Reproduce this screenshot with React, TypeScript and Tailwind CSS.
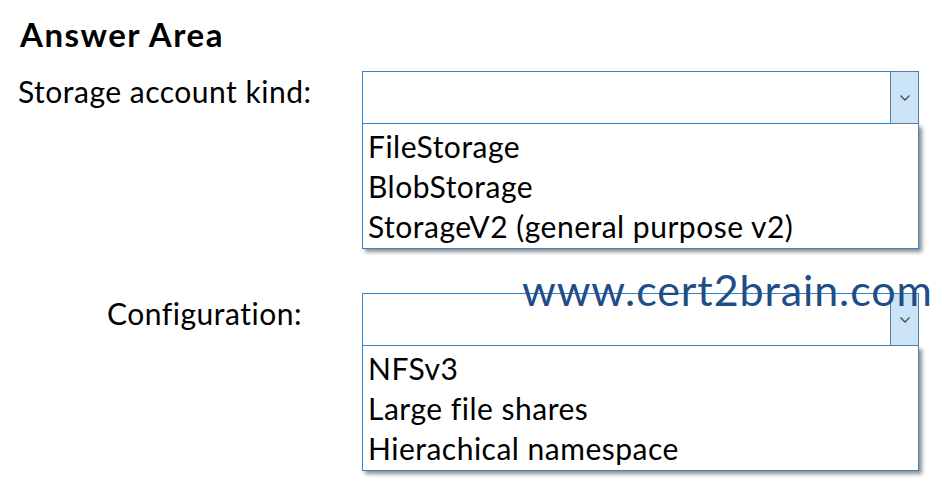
import React from 'react';

const font = { fontFamily: 'Lato, "Open Sans", sans-serif' };

interface DropdownProps {
    options: string[];
}

const Chevron = () => (
    <svg width="12" height="8" viewBox="0 0 12 8" fill="none">
        <path d="M1.5 1.5 L6 6 L10.5 1.5" stroke="#4d4d4d" strokeWidth="1.4" />
    </svg>
);

const Dropdown: React.FC<DropdownProps> = ({ options }) => (
    <div className="w-[557px]">
        <div className="flex h-[53px] border border-[#2f86d6] bg-white">
            <div className="flex-1" />
            <div className="-my-px -mr-px flex w-[29px] items-center justify-center border border-[#5a7ea3] bg-[#cce4f7]">
                <Chevron />
            </div>
        </div>
        <div className="flex flex-col border border-t-0 border-[#2f86d6] bg-white pl-[5px] pt-[2px] pb-[2px] shadow-[3px_3px_4px_rgba(0,0,0,0.45)]">
            {options.map((o) => (
                <div key={o} className="h-[40px] text-[30px] leading-[40px] tracking-[0.5px] text-black">
                    {o}
                </div>
            ))}
        </div>
    </div>
);

export default function App() {
    return (
        <div className="relative h-[495px] w-[948px] bg-white" style={font}>
            <div className="flex flex-col pl-[18px] pt-[14px]">
                <h1 className="ml-[2px] text-[33px] font-bold leading-[40px] tracking-[1.5px] text-black">Answer Area</h1>
                <div className="mt-[17px] flex">
                    <div className="w-[344px] text-[30px] leading-[40px] tracking-[0.5px] text-black">Storage account kind:</div>
                    <Dropdown options={['FileStorage', 'BlobStorage', 'StorageV2 (general purpose v2)']} />
                </div>
                <div className="mt-[44px] flex">
                    <div className="w-[344px] pl-[89px] text-[30px] leading-[40px] tracking-[0.5px] text-black">Configuration:</div>
                    <Dropdown options={['NFSv3', 'Large file shares', 'Hierachical namespace']} />
                </div>
            </div>
            <div className="absolute left-[522px] top-[265px] text-[43px] leading-[50px] tracking-[0.9px] text-[#1f4e86]">
                www.cert2brain.com
            </div>
        </div>
    );
}
